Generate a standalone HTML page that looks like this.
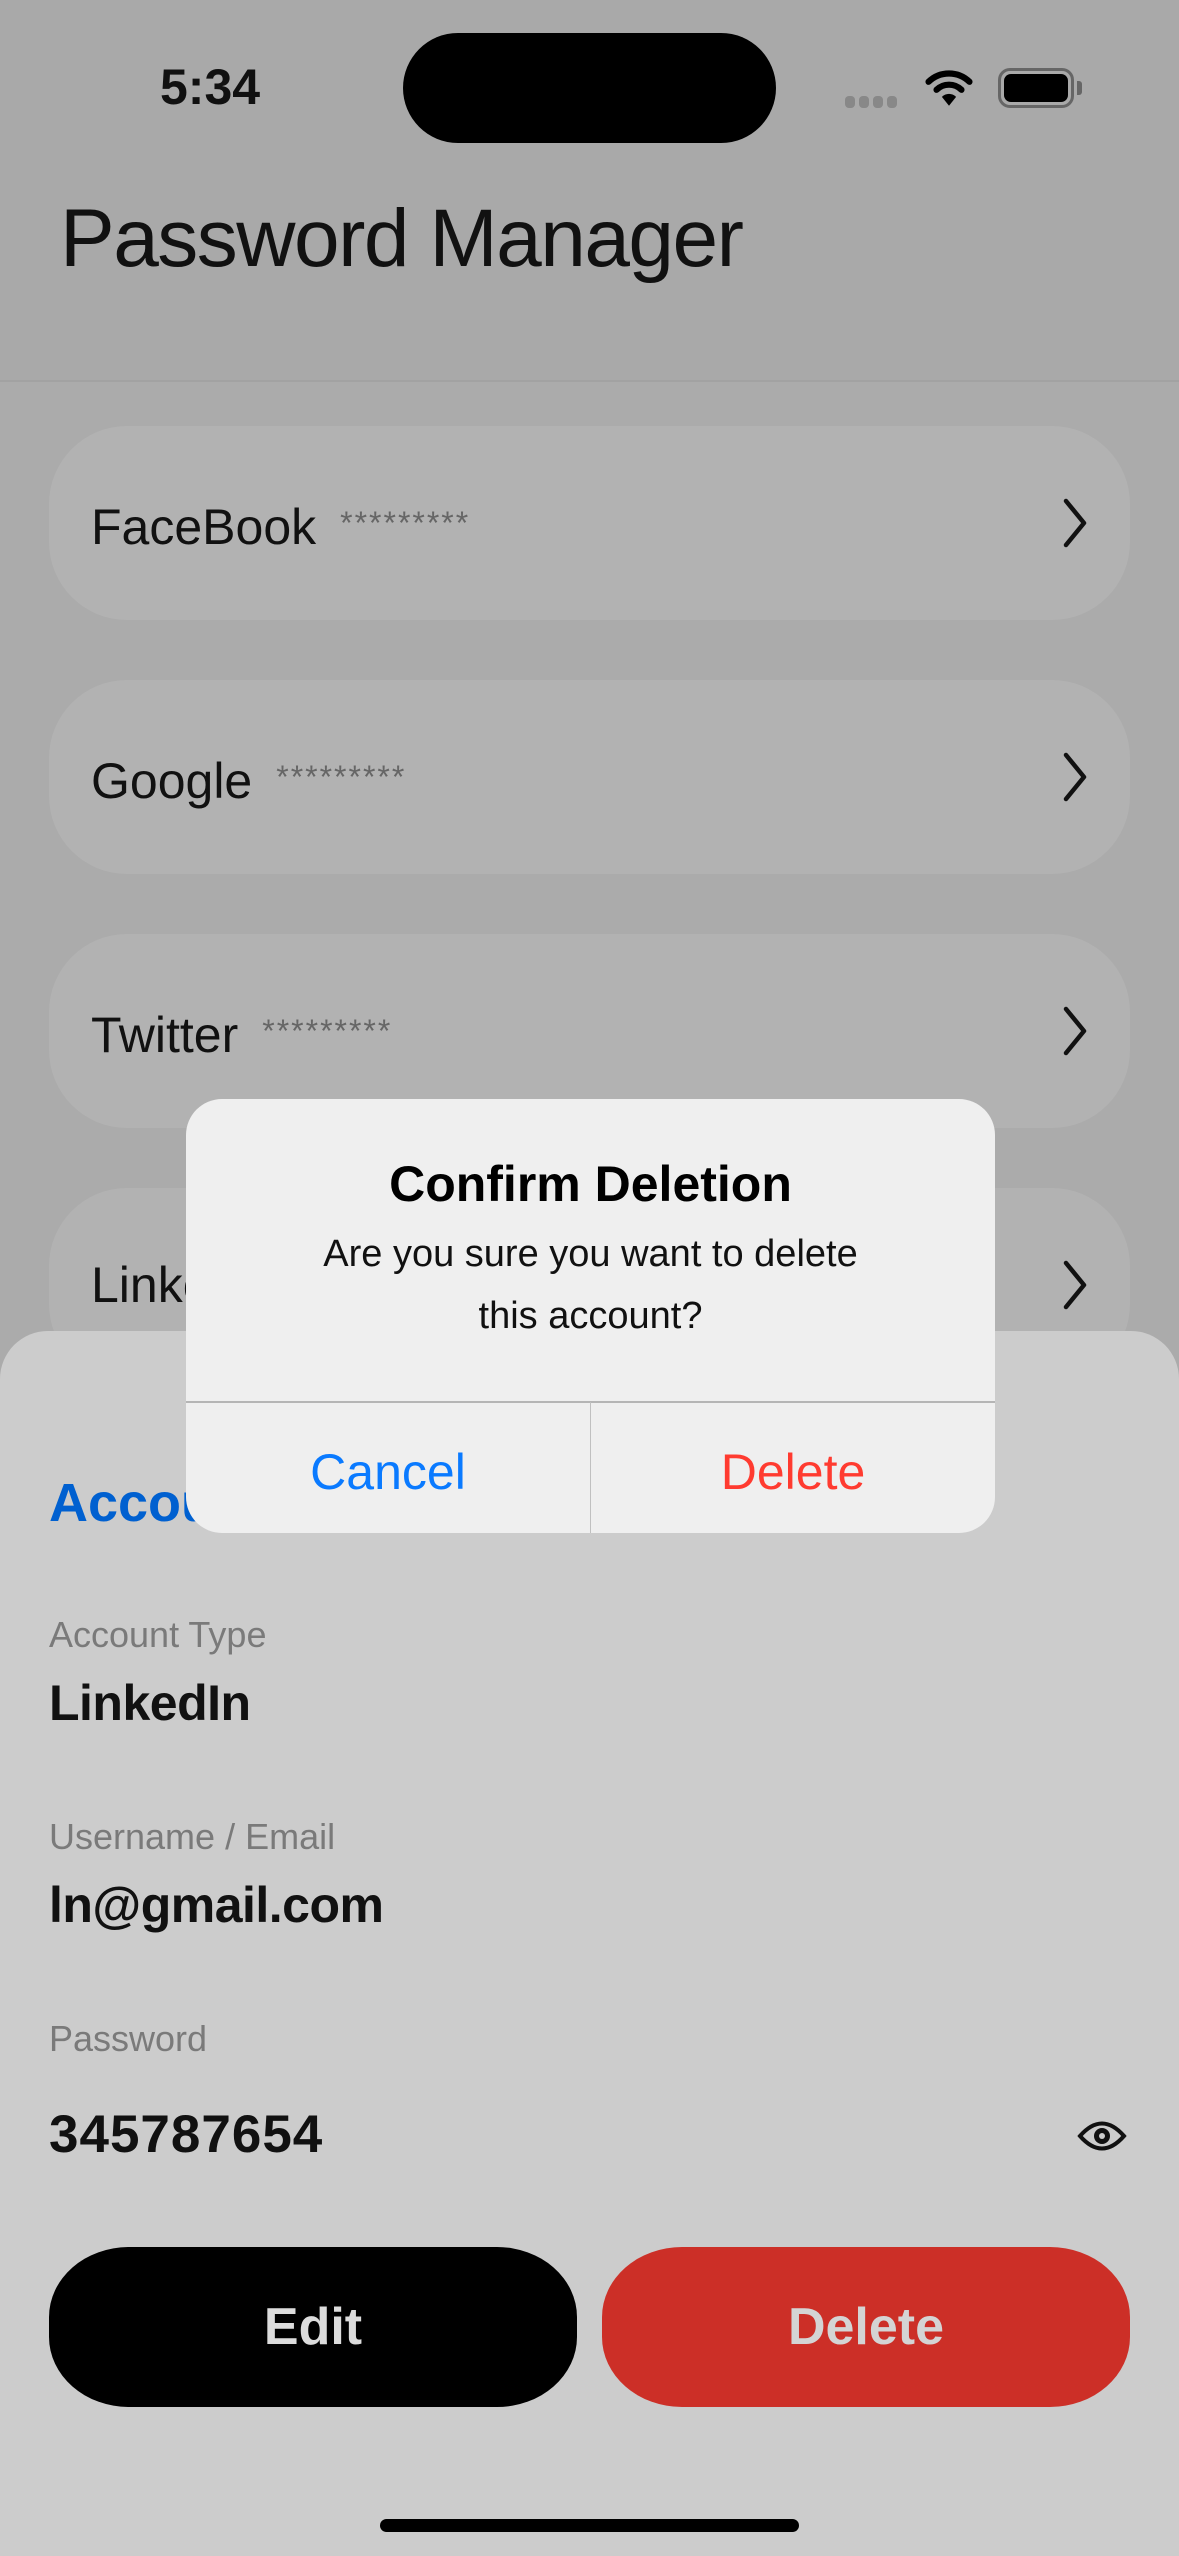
<!DOCTYPE html>
<html><head><meta charset="utf-8"><style>
*{margin:0;padding:0;box-sizing:border-box}
body{width:1179px;height:2556px;overflow:hidden;background:#ababab;font-family:"Liberation Sans",sans-serif;position:relative}
.abs{position:absolute}
.row{position:absolute;left:49px;width:1081px;height:194px;background:#b2b2b2;border-radius:78px}
.row .t{position:absolute;left:42px;top:0;line-height:194px;font-size:50px;color:#111}
.row .s{font-size:32px;color:#666;margin-left:24px;vertical-align:10px;letter-spacing:2px}
.row svg{position:absolute;right:42px;top:72px}
.lbl{position:absolute;left:49px;font-size:36px;color:#7a7a7a}
.val{position:absolute;left:49px;font-size:50px;font-weight:bold;color:#111}
</style></head><body>
<div class="abs" style="left:0;top:0;width:1179px;height:382px;background:#a9a9a9;border-bottom:2px solid #a2a2a2"></div>
<div class="abs" style="left:160px;top:58px;font-size:50px;font-weight:bold;color:#111">5:34</div>
<div class="abs" style="left:403px;top:33px;width:373px;height:110px;background:#000;border-radius:55px"></div>
<div class="abs" style="left:845px;top:96px;width:60px;height:12px">
<span class="abs" style="left:0;width:10px;height:12px;background:#888;border-radius:4px"></span>
<span class="abs" style="left:14px;width:10px;height:12px;background:#888;border-radius:4px"></span>
<span class="abs" style="left:28px;width:10px;height:12px;background:#888;border-radius:4px"></span>
<span class="abs" style="left:42px;width:10px;height:12px;background:#888;border-radius:4px"></span>
</div>
<svg class="abs" style="left:925px;top:68px" width="48" height="40" viewBox="0 0 54 44"><path d="M4 15 A33 33 0 0 1 50 15" stroke="#000" stroke-width="7" fill="none" stroke-linecap="round"/><path d="M13 24 A20 20 0 0 1 41 24" stroke="#000" stroke-width="7" fill="none" stroke-linecap="round"/><path d="M27 42 L19 32 A11 11 0 0 1 35 32 Z" fill="#000"/></svg>
<div class="abs" style="left:998px;top:68px;width:76px;height:40px;border:3px solid #666;border-radius:12px"></div>
<div class="abs" style="left:1004px;top:74px;width:64px;height:28px;background:#000;border-radius:7px"></div>
<div class="abs" style="left:1077px;top:81px;width:5px;height:14px;background:#666;border-radius:0 3px 3px 0"></div>
<div class="abs" style="left:60px;top:192px;font-size:82px;color:#111;letter-spacing:-1.5px">Password Manager</div>

<div class="row" style="top:426px"><div class="t">FaceBook<span class="s">*********</span></div><svg width="26" height="50" viewBox="0 0 26 50"><path d="M4 3 L22 25 L4 47" stroke="#111" stroke-width="4.5" fill="none" stroke-linecap="round" stroke-linejoin="round"/></svg></div>
<div class="row" style="top:680px"><div class="t">Google<span class="s">*********</span></div><svg width="26" height="50" viewBox="0 0 26 50"><path d="M4 3 L22 25 L4 47" stroke="#111" stroke-width="4.5" fill="none" stroke-linecap="round" stroke-linejoin="round"/></svg></div>
<div class="row" style="top:934px"><div class="t">Twitter<span class="s">*********</span></div><svg width="26" height="50" viewBox="0 0 26 50"><path d="M4 3 L22 25 L4 47" stroke="#111" stroke-width="4.5" fill="none" stroke-linecap="round" stroke-linejoin="round"/></svg></div>
<div class="row" style="top:1188px"><div class="t">LinkedIn</div><svg width="26" height="50" viewBox="0 0 26 50"><path d="M4 3 L22 25 L4 47" stroke="#111" stroke-width="4.5" fill="none" stroke-linecap="round" stroke-linejoin="round"/></svg></div>

<div class="abs" style="left:0;top:1331px;width:1179px;height:1225px;background:#cccccc;border-radius:48px 48px 0 0"></div>
<div class="abs" style="left:49px;top:1472px;font-size:54px;font-weight:bold;color:#0060d0">Account Details</div>
<div class="lbl" style="top:1614px">Account Type</div>
<div class="val" style="top:1674px;letter-spacing:-0.5px">LinkedIn</div>
<div class="lbl" style="top:1816px">Username / Email</div>
<div class="val" style="top:1876px;letter-spacing:-0.5px">ln@gmail.com</div>
<div class="lbl" style="top:2018px">Password</div>
<div class="val" style="top:2104px;font-size:53px;letter-spacing:1px">345787654</div>
<svg class="abs" style="left:1077px;top:2119px" width="50" height="34" viewBox="0 0 50 34"><path d="M3 17 Q25 -8 47 17 Q25 42 3 17 Z" stroke="#111" stroke-width="4" fill="none"/><circle cx="25" cy="17" r="8" fill="#111"/><circle cx="25" cy="17" r="3" fill="#ccc"/></svg>
<div class="abs" style="left:49px;top:2247px;width:528px;height:160px;background:#000;border-radius:80px/70px;color:#dcdcdc;font-size:52px;font-weight:bold;text-align:center;line-height:160px">Edit</div>
<div class="abs" style="left:602px;top:2247px;width:528px;height:160px;background:#cc2f27;border-radius:80px/70px;color:#d4d4d4;font-size:52px;font-weight:bold;text-align:center;line-height:160px">Delete</div>
<div class="abs" style="left:380px;top:2519px;width:419px;height:13px;background:#000;border-radius:7px"></div>

<div class="abs" style="left:186px;top:1099px;width:809px;height:434px;background:#efefef;border-radius:36px;overflow:hidden">
<div class="abs" style="left:0;top:56px;width:809px;text-align:center;font-size:50px;font-weight:bold;color:#000">Confirm Deletion</div>
<div class="abs" style="left:0;top:124px;width:809px;text-align:center;font-size:38px;line-height:62px;color:#111">Are you sure you want to delete<br>this account?</div>
<div class="abs" style="left:0;top:302px;width:809px;height:2px;background:#b5b5b5"></div>
<div class="abs" style="left:404px;top:303px;width:1px;height:131px;background:#c0c0c0"></div>
<div class="abs" style="left:0;top:308px;width:404px;height:130px;line-height:130px;text-align:center;font-size:50px;color:#0a7aff">Cancel</div>
<div class="abs" style="left:405px;top:308px;width:404px;height:130px;line-height:130px;text-align:center;font-size:50px;color:#ff3b30">Delete</div>
</div>
</body></html>
